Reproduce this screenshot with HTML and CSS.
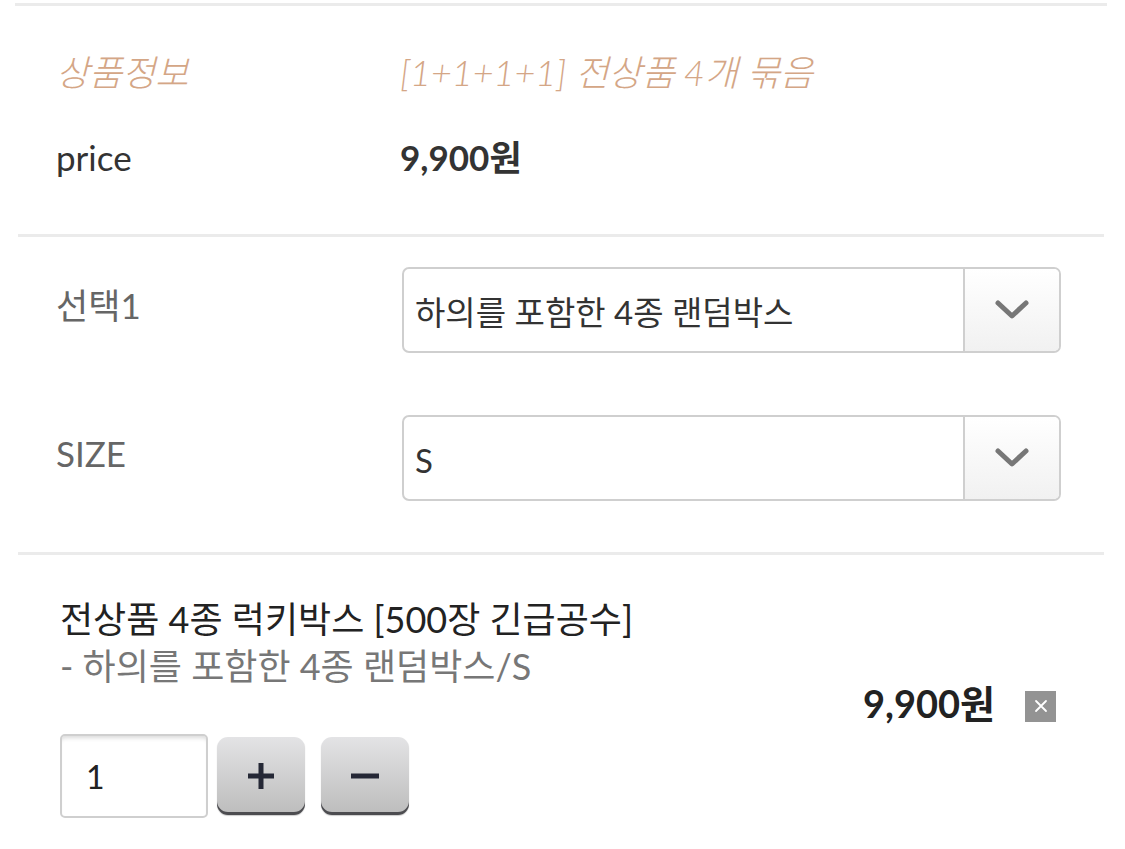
FILE: index.html
```html
<!DOCTYPE html>
<html lang="ko">
<head>
    <meta charset="UTF-8">
    <meta name="viewport" content="width=device-width, initial-scale=1.0">
    <title>상품 옵션</title>
    <link rel="stylesheet" href="styles.css">
</head>
<body>
    <div class="product">
        <div class="section summary">
            <div class="row title">
                <span class="label">상품정보</span>
                <span class="value">[1+1+1+1] 전상품 4개 묶음</span>
            </div>
            <div class="row">
                <span class="label">price</span>
                <strong class="value">9,900원</strong>
            </div>
        </div>

        <div class="section options">
            <div class="row option">
                <span class="label">선택1</span>
                <div class="select">
                    <span class="select-text">하의를 포함한 4종 랜덤박스</span>
                    <span class="select-arrow">
                        <svg width="36" height="22" viewBox="0 0 36 22"><path d="M4 4 L18 17 L32 4" fill="none" stroke="#777" stroke-width="5" stroke-linecap="round" stroke-linejoin="round"/></svg>
                    </span>
                </div>
            </div>
            <div class="row option">
                <span class="label">SIZE</span>
                <div class="select">
                    <span class="select-text">S</span>
                    <span class="select-arrow">
                        <svg width="36" height="22" viewBox="0 0 36 22"><path d="M4 4 L18 17 L32 4" fill="none" stroke="#777" stroke-width="5" stroke-linecap="round" stroke-linejoin="round"/></svg>
                    </span>
                </div>
            </div>
        </div>

        <div class="item">
            <div class="item-head">
                <div class="item-desc">
                    <p class="item-name">전상품 4종 럭키박스 [500장 긴급공수]</p>
                    <p class="item-opt">- 하의를 포함한 4종 랜덤박스/S</p>
                </div>
                <div class="item-total">
                    <strong>9,900원</strong>
                    <a class="delete" href="#">
                        <svg width="16" height="16" viewBox="0 0 16 16"><path d="M3 3 L13 13 M13 3 L3 13" stroke="#fff" stroke-width="1.8" stroke-linecap="round"/></svg>
                    </a>
                </div>
            </div>
            <div class="qty">
                <input class="qty-input" type="text" value="1">
                <button class="qty-btn" type="button">
                    <svg width="30" height="30" viewBox="0 0 30 30"><path d="M15 2 V28 M2 15 H28" stroke="#252836" stroke-width="5"/></svg>
                </button>
                <button class="qty-btn" type="button">
                    <svg width="30" height="30" viewBox="0 0 30 30"><path d="M1 15 H29" stroke="#252836" stroke-width="5"/></svg>
                </button>
            </div>
        </div>
    </div>
</body>
</html>
```

FILE: styles.css
```css
body {
    margin: 0;
    font-family: Lato, "Noto Sans CJK KR", sans-serif;
    background-color: #fff;
    color: #333;
}
.product {
    padding-top: 3px;
}
.section {
    border-top: 3px solid #ebebeb;
    margin: 0 21px 0 18px;
}
.summary {
    margin-left: 15px;
    margin-right: 18px;
    padding: 42px 0 53px 41px;
}
.row {
    display: flex;
    font-size: 35px;
    line-height: 48px;
}
.row + .row {
    margin-top: 37px;
}
.label {
    width: 344px;
    flex-shrink: 0;
}
.title {
    color: #d4a686;
    font-style: italic;
    font-weight: 300;
    font-size: 36px;
}
.summary .value {
    font-weight: bold;
}
.summary .title .value {
    font-weight: 300;
}
.options {
    padding: 30px 43px 51px 38px;
}
.option {
    align-items: flex-start;
}
.option + .option {
    margin-top: 62px;
}
.option .label {
    width: 346px;
    color: #666;
    padding-top: 14px;
    font-size: 35px;
}
.select {
    flex: 1;
    display: flex;
    height: 82px;
    border: 2px solid #cfcfcf;
    border-radius: 7px;
    box-sizing: content-box;
    overflow: hidden;
    color: #333;
}
.select-text {
    flex: 1;
    padding-left: 11px;
    line-height: 86px;
    font-size: 33px;
}
.select-arrow {
    width: 94px;
    border-left: 2px solid #cfcfcf;
    display: flex;
    align-items: center;
    justify-content: center;
    background: linear-gradient(#fff, #f1f1f1);
}
.item {
    border-top: 3px solid #ebebeb;
    margin: 0 21px 0 18px;
    padding: 44px 48px 0 42px;
}
.item-head {
    display: flex;
    justify-content: space-between;
}
.item-desc p {
    margin: 0;
    font-size: 36px;
    line-height: 40px;
}
.item-name {
    color: #222;
}
.item-desc .item-opt {
    margin-top: 7px;
    color: #777;
}
.item-total {
    display: flex;
    align-items: center;
    gap: 30px;
    padding-top: 82px;
    height: 40px;
    font-size: 38px;
    color: #222;
}
.delete {
    display: flex;
    align-items: center;
    justify-content: center;
    width: 31px;
    height: 31px;
    background-color: #939393;
    margin-top: 10px;
}
.qty {
    display: flex;
    align-items: center;
    gap: 9px;
    margin-top: 13px;
}
.qty-input {
    width: 148px;
    height: 84px;
    box-sizing: border-box;
    border: 2px solid #cfcfcf;
    border-radius: 5px;
    box-shadow: inset 0 5px 4px -3px rgba(0, 0, 0, 0.15);
    padding: 0 0 0 24px;
    font-family: Lato, sans-serif;
    font-size: 32px;
    color: #222;
}
.qty-btn {
    width: 88px;
    height: 78px;
    padding: 0;
    border: none;
    border-radius: 11px;
    background: linear-gradient(#e3e3e5, #bcbcbc);
    box-shadow: inset 0 -3px 0 #4c4c50, 0 1px 1px rgba(0, 0, 0, 0.2);
    display: flex;
    align-items: center;
    justify-content: center;
    cursor: pointer;
}
.qty-btn + .qty-btn {
    margin-left: 7px;
}
```
